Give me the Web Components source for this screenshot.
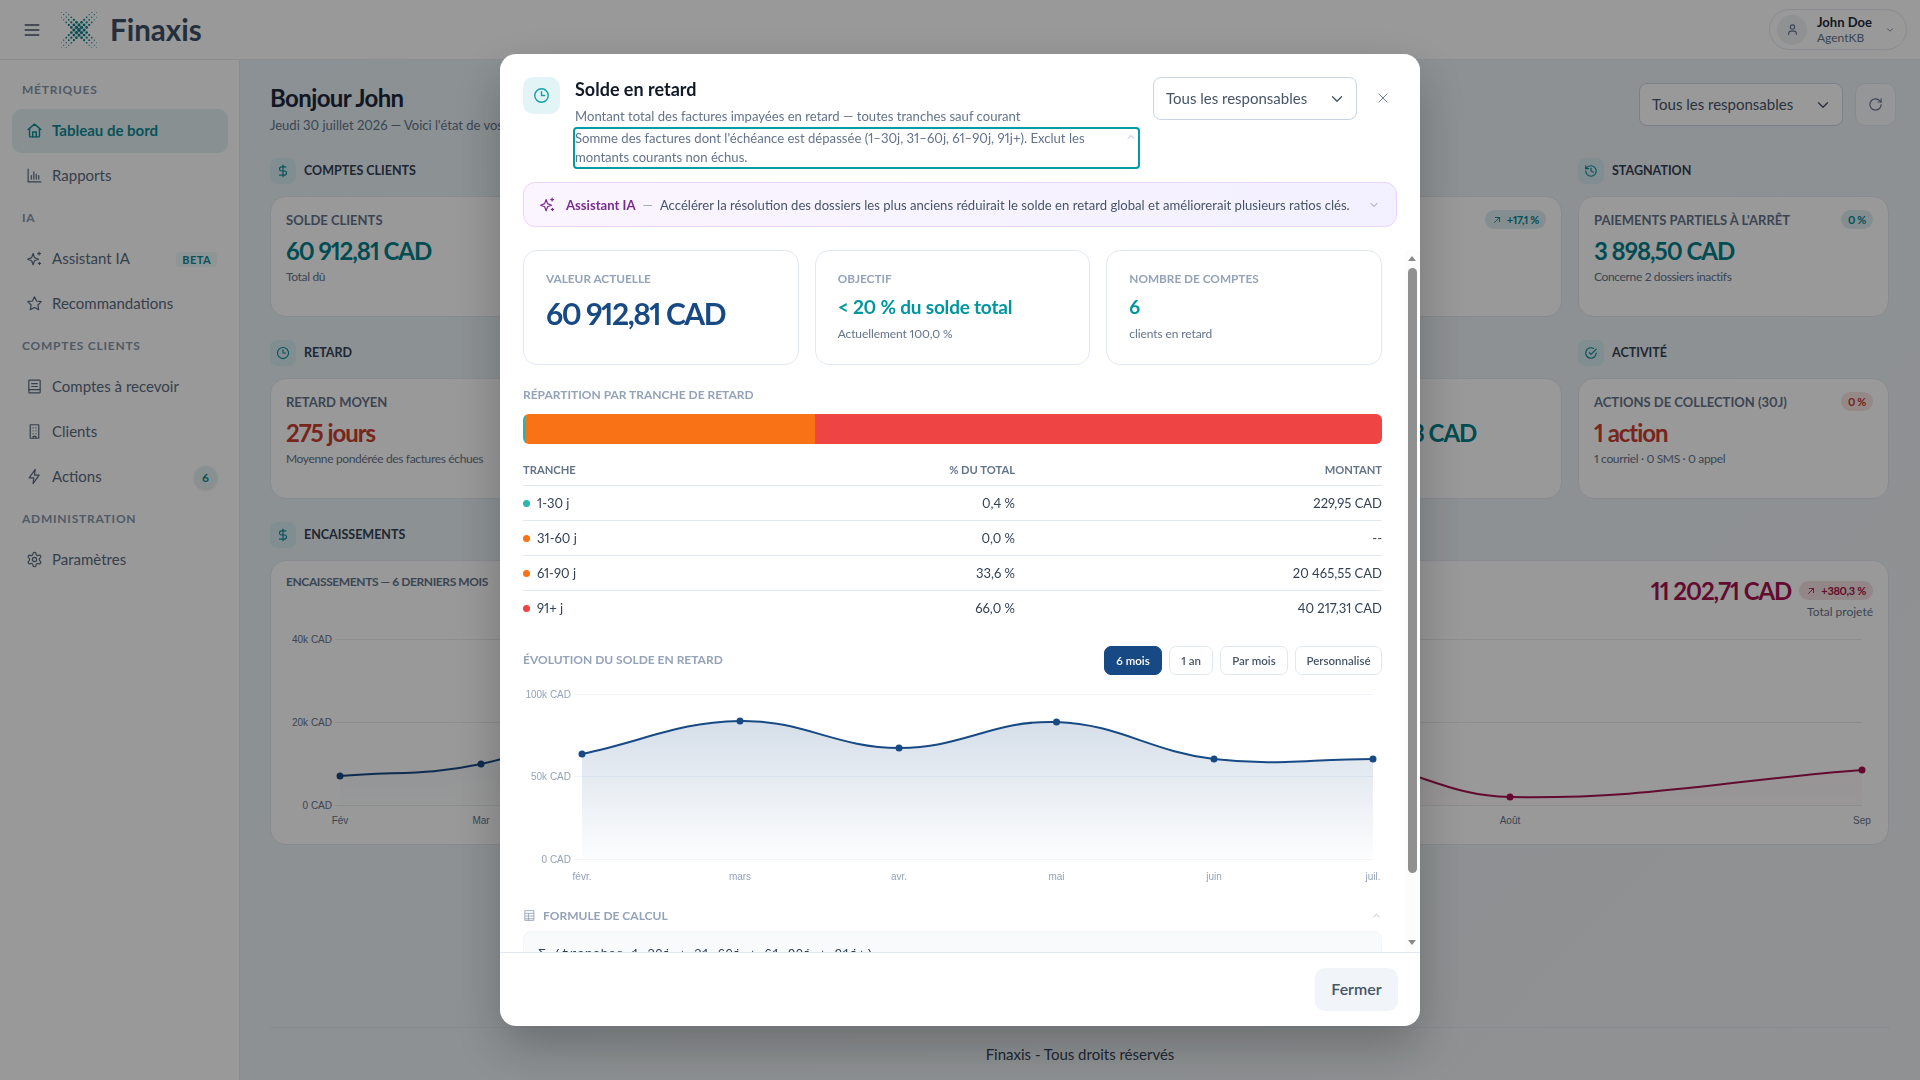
<!DOCTYPE html>
<html lang="fr">
<head>
<meta charset="utf-8">
<title>Finaxis</title>
<style>
html,body{margin:0;height:100%;overflow:hidden}
body{font-family:Lato,"Noto Sans",sans-serif;font-variant-numeric:proportional-nums;color:#334155;background:#fff}
.frame{display:flex;height:1020px}
</style>
</head>
<body>
<fx-topbar>
    <fx-user name="John Doe" role="AgentKB"></fx-user>
</fx-topbar>
<div class="frame">
    <fx-sidebar>
        <fx-nav-label>Métriques</fx-nav-label>
        <fx-nav-item icon="home" active>Tableau de bord</fx-nav-item>
        <fx-nav-item icon="chart">Rapports</fx-nav-item>
        <fx-nav-label>IA</fx-nav-label>
        <fx-nav-item icon="sparkles" tag="BETA">Assistant IA</fx-nav-item>
        <fx-nav-item icon="star">Recommandations</fx-nav-item>
        <fx-nav-label>Comptes clients</fx-nav-label>
        <fx-nav-item icon="ledger">Comptes à recevoir</fx-nav-item>
        <fx-nav-item icon="building">Clients</fx-nav-item>
        <fx-nav-item icon="zap" count="6">Actions</fx-nav-item>
        <fx-nav-label>Administration</fx-nav-label>
        <fx-nav-item icon="gear">Paramètres</fx-nav-item>
    </fx-sidebar>
    <fx-main>
        <fx-page-head title="Bonjour John" sub="Jeudi 30 juillet 2026 — Voici l'état de vos"></fx-page-head>
        <fx-row>
            <fx-cell heading="Comptes clients" icon="dollar">
                <fx-stat label="Solde clients" value="60 912,81 CAD" sub="Total dû"></fx-stat>
            </fx-cell>
            <fx-cell col="4">
                <fx-stat label="" value="" sub="" badge="+17,1 %" trend></fx-stat>
            </fx-cell>
            <fx-cell col="5" heading="Stagnation" icon="history">
                <fx-stat label="Paiements partiels à l'arrêt" value="3 898,50 CAD" sub="Concerne 2 dossiers inactifs" badge="0 %"></fx-stat>
            </fx-cell>
        </fx-row>
        <fx-row>
            <fx-cell heading="Retard" icon="clock">
                <fx-stat label="Retard moyen" value="275 jours" sub="Moyenne pondérée des factures échues" tone="red"></fx-stat>
            </fx-cell>
            <fx-cell col="4">
                <fx-stat label="" value="3 CAD" sub="" indent="144"></fx-stat>
            </fx-cell>
            <fx-cell col="5" heading="Activité" icon="check">
                <fx-stat label="Actions de collection (30j)" value="1 action" sub="1 courriel · 0 SMS · 0 appel" badge="0 %" tone="red"></fx-stat>
            </fx-cell>
        </fx-row>
        <fx-section-head heading="Encaissements" icon="dollar"></fx-section-head>
        <fx-cash-card></fx-cash-card>
        <fx-page-foot>Finaxis - Tous droits réservés</fx-page-foot>
    </fx-main>
</div>

<fx-modal>
    <fx-modal-head slot="head" heading="Solde en retard" sub="Montant total des factures impayées en retard — toutes tranches sauf courant" note="Somme des factures dont l'échéance est dépassée (1–30j, 31–60j, 61–90j, 91j+). Exclut les montants courants non échus."></fx-modal-head>
    <fx-ai-banner slot="head">Accélérer la résolution des dossiers les plus anciens réduirait le solde en retard global et améliorerait plusieurs ratios clés.</fx-ai-banner>

    <fx-kpi-grid>
        <fx-kpi label="Valeur actuelle" value="60 912,81 CAD" big></fx-kpi>
        <fx-kpi label="Objectif" value="&lt; 20 % du solde total" sub="Actuellement 100,0 %"></fx-kpi>
        <fx-kpi label="Nombre de comptes" value="6" sub="clients en retard"></fx-kpi>
    </fx-kpi-grid>
    <fx-overline style="margin-top:22px">Répartition par tranche de retard</fx-overline>
    <fx-stack-bar></fx-stack-bar>
    <fx-tranche-table></fx-tranche-table>
    <fx-evolution-head></fx-evolution-head>
    <fx-line-chart style="margin-top:9px" width="859" height="210" left="51" right="850" label-x="48" label-y="197"
        data-grid='[[11,"100k CAD"],[93,"50k CAD"],[176,"0 CAD"]]'
        data-ticks='[[59,"févr."],[217,"mars"],[376,"avr."],[533.5,"mai"],[691,"juin"],[850,"juil."]]'
        data-series='[{"color":"#174a85","fill":"#174a85","top":0.18,"bottom":0.01,"gradTop":38,"base":176,"pts":[[59,71],[217,38],[376,65],[533.5,39],[691,76],[850,76]]}]'>
    </fx-line-chart>
    <fx-formula></fx-formula>

    <fx-button slot="foot">Fermer</fx-button>
</fx-modal>

<script>
// **************************************************************************** icons
const ICONS = {
    menu: '<path d="M4 6h16M4 12h16M4 18h16"/>',
    home: '<path d="M3 10.5 12 3l9 7.5"/><path d="M5 9v11a1 1 0 0 0 1 1h12a1 1 0 0 0 1-1V9"/><path d="M9.5 21v-7h5v7"/>',
    chart: '<path d="M3 3v18h18"/><path d="M7.5 17v-5M11 17V7M14.500 17v-7M18 17v-5"/>',
    sparkles: '<path d="M10 5l2 5.800 5.800 2.200-5.800 2.200-2 5.800-2-5.800-5.800-2.200 5.800-2.200z"/><path d="M18.500 3v4M16.500 5h4M19 17.500v3M17.500 19h3"/>',
    star: '<path d="M12 2.500l2.950 5.980 6.600.96-4.780 4.650 1.130 6.570L12 17.560l-5.900 3.100 1.130-6.570-4.780-4.650 6.600-.96z"/>',
    ledger: '<path d="M5 3h14a1 1 0 0 1 1 1v16a1 1 0 0 1-1 1H5a1 1 0 0 1-1-1V4a1 1 0 0 1 1-1z"/><path d="M8 8h8M8 12h8M4 16.500h16"/>',
    building: '<path d="M6 2.500h12v19H6z"/><path d="M10 7h.01M14 7h.01M10 11h.01M14 11h.01M10 15h.01M14 15h.01M10 21v-2h4v2"/>',
    zap: '<path d="M13 2 4.500 14H11l-1 8 8.500-12H12z"/>',
    gear: '<path d="M12.220 2h-.440a2 2 0 0 0-2 2v.180a2 2 0 0 1-1 1.730l-.430.250a2 2 0 0 1-2 0l-.150-.080a2 2 0 0 0-2.730.730l-.220.380a2 2 0 0 0 .730 2.730l.150.100a2 2 0 0 1 1 1.720v.510a2 2 0 0 1-1 1.740l-.150.090a2 2 0 0 0-.730 2.730l.220.380a2 2 0 0 0 2.730.730l.150-.080a2 2 0 0 1 2 0l.430.250a2 2 0 0 1 1 1.730V20a2 2 0 0 0 2 2h.440a2 2 0 0 0 2-2v-.180a2 2 0 0 1 1-1.730l.430-.250a2 2 0 0 1 2 0l.150.080a2 2 0 0 0 2.730-.730l.220-.390a2 2 0 0 0-.730-2.730l-.150-.080a2 2 0 0 1-1-1.740v-.500a2 2 0 0 1 1-1.740l.150-.090a2 2 0 0 0 .730-2.730l-.220-.380a2 2 0 0 0-2.730-.730l-.150.080a2 2 0 0 1-2 0l-.430-.250a2 2 0 0 1-1-1.730V4a2 2 0 0 0-2-2z"/><circle cx="12" cy="12" r="3"/>',
    dollar: '<path d="M12 2v20"/><path d="M17 5H9.500a3.500 3.500 0 0 0 0 7h5a3.500 3.500 0 0 1 0 7H6"/>',
    clock: '<circle cx="12" cy="12" r="9.500"/><path d="M12 6.500V12h4.500"/>',
    history: '<path d="M3 12a9 9 0 1 0 9-9 9.750 9.750 0 0 0-6.740 2.740L3 8"/><path d="M3 3v5h5"/><path d="M12 7v5l4 2"/>',
    check: '<path d="M21 12a9 9 0 1 1-4.500-7.800"/><path d="M9 11.500l3 3 9-9"/>',
    refresh: '<path d="M21 12a9 9 0 1 1-9-9c2.520 0 4.930 1 6.740 2.740L21 8"/><path d="M21 3v5h-5"/>',
    user: '<path d="M5 21v-1.500a4.500 4.500 0 0 1 4.500-4.500h5a4.500 4.500 0 0 1 4.500 4.500V21"/><circle cx="12" cy="7.500" r="4"/>',
    up: '<path d="M6 15l6-6 6 6"/>',
    down: '<path d="M6 9l6 6 6-6"/>',
    close: '<path d="M5 5l14 14M19 5 5 19"/>',
    trend: '<path d="M6 18 18 6M8 6h10v10"/>',
    table: '<path d="M4 3h16v18H4z"/><path d="M4 8h16M4 13h16M4 18h16M10 8v13"/>'
};

// **************************************************************************** helper
// base class: open a shadow root and write styles + markup in it
class FxElement extends HTMLElement {
    render(css, html) {
        (this.shadowRoot || this.attachShadow({ mode: 'open' })).innerHTML = `<style>${css}</style>${html}`;
    }
    attr(name, fallback = '') {
        return this.hasAttribute(name) ? this.getAttribute(name) : fallback;
    }
}

// **************************************************************************** <fx-icon>
customElements.define('fx-icon', class extends FxElement {
    connectedCallback() {
        const size = this.attr('size', '16');
        const sw = this.attr('weight', '2');
        this.render(
            ':host{display:inline-flex;flex:none}svg{display:block}',
            `<svg width="${size}" height="${size}" viewBox="0 0 24 24" fill="none" stroke="currentColor" stroke-width="${sw}" stroke-linecap="round" stroke-linejoin="round">${ICONS[this.attr('name')] || ''}</svg>`
        );
    }
});

// **************************************************************************** <fx-logo>
customElements.define('fx-logo', class extends FxElement {
    connectedCallback() {
        // dots on a diagonal lattice, along the two arms of an X
        let dots = '';
        const k = 2.55;
        for (let u = -7; u <= 7; u++) {
            for (let v = -7; v <= 7; v++) {
                if (Math.abs(u) > 1 && Math.abs(v) > 1) continue;
                const x = 18 + (u + v) * k;
                const y = 18 + (u - v) * k;
                if (Math.abs(x - 18) > 18 || Math.abs(y - 18) > 18) continue;
                const d = Math.hypot(x - 18, y - 18);
                dots += `<circle cx="${x.toFixed(2)}" cy="${y.toFixed(2)}" r="${Math.max(0.6, 1.9 - d * 0.07).toFixed(2)}"/>`;
            }
        }
        this.render(
            ":host{display:flex;align-items:center;gap:13px}" +
            "span{font:700 29.5px/1 Lato,sans-serif;color:#3b4f66}",
            `<svg width="36" height="36" viewBox="0 0 36 36" fill="#0e7f8c">${dots}</svg><span>Finaxis</span>`
        );
    }
});

// **************************************************************************** <fx-topbar>
customElements.define('fx-topbar', class extends FxElement {
    connectedCallback() {
        this.render(
            ":host{display:flex;align-items:center;justify-content:space-between;height:60px;box-sizing:border-box;" +
            "padding:0 13px 0 22px;background:#fff;border-bottom:1px solid #e8edf2}" +
            ".left{display:flex;align-items:center;gap:19px;color:#475569}",
            `<div class="left"><fx-icon name="menu" size="20"></fx-icon><fx-logo></fx-logo></div><slot></slot>`
        );
    }
});

// **************************************************************************** <fx-user>
customElements.define('fx-user', class extends FxElement {
    connectedCallback() {
        this.render(
            ":host{display:flex;align-items:center;gap:10px;height:41px;padding:0 11px 0 7px;box-sizing:border-box;" +
            "width:138px;border:1px solid #e2e8f0;border-radius:21px}" +
            ".av{width:30px;height:30px;border-radius:50%;background:#eef2f6;display:grid;place-items:center;color:#64748b}" +
            ".txt{flex:1;line-height:16px}.n{font-size:13px;font-weight:700;color:#1e293b}.r{font-size:12px;color:#64748b}" +
            "fx-icon{color:#64748b}",
            `<div class="av"><fx-icon name="user" size="13"></fx-icon></div>
             <div class="txt"><div class="n">${this.attr('name')}</div><div class="r">${this.attr('role')}</div></div>
             <fx-icon name="down" size="10"></fx-icon>`
        );
    }
});

// **************************************************************************** <fx-sidebar>
customElements.define('fx-sidebar', class extends FxElement {
    connectedCallback() {
        this.render(
            ":host{display:block;flex:none;width:240px;box-sizing:border-box;padding:11px 11px 0 12px;background:#fff;border-right:1px solid #e2e8f0}",
            "<slot></slot>"
        );
    }
});

customElements.define('fx-nav-label', class extends FxElement {
    connectedCallback() {
        this.render(
            ":host{display:flex;align-items:center;height:38px;padding-left:10px;font-size:12px;font-weight:700;" +
            "letter-spacing:.75px;text-transform:uppercase;color:#8896ab}" +
            "span{transform:translateY(-1px)}",
            "<span><slot></slot></span>"
        );
    }
});

customElements.define('fx-nav-item', class extends FxElement {
    connectedCallback() {
        const active = this.hasAttribute('active');
        const tag = this.attr('tag');
        const count = this.attr('count');
        this.render(
            ":host{display:flex;align-items:center;height:44px;margin-bottom:1px;padding:0 11px 0 14px;border-radius:10px;" +
            "font-size:15px;color:#5b6b80}" +
            ":host([active]){background:#e3f1f3;color:#0e8a96;font-weight:700}" +
            "fx-icon{margin-right:9px;transform:translateY(-1px)}.grow{flex:1;transform:translateY(-1px)}" +
            ".tag{font-size:11px;font-weight:700;letter-spacing:.4px;color:#0e8a96;background:#eef7f8;border-radius:4px;padding:1px 6px}" +
            ".count{width:23px;height:23px;border-radius:50%;display:grid;place-items:center;font-size:12px;font-weight:700;" +
            "color:#0e8a96;background:#e3f1f3;box-shadow:0 1px 3px rgba(0,0,0,.12)}",
            `<fx-icon name="${this.attr('icon')}" size="17" weight="${active ? 2 : 1.7}"></fx-icon>
             <span class="grow"><slot></slot></span>
             ${tag ? `<span class="tag">${tag}</span>` : ''}
             ${count ? `<span class="count">${count}</span>` : ''}`
        );
    }
});

// **************************************************************************** <fx-main>
customElements.define('fx-main', class extends FxElement {
    connectedCallback() {
        this.render(
            ":host{display:flex;flex-direction:column;flex:1;min-width:0;box-sizing:border-box;padding:23px 24px 0 30px;" +
            "background:linear-gradient(135deg,#e8f2f7,#edf2f5 60%,#eef2f4)}",
            "<slot></slot>"
        );
    }
});

customElements.define('fx-page-head', class extends FxElement {
    connectedCallback() {
        this.render(
            ":host{display:flex;justify-content:space-between;align-items:flex-start;margin-bottom:24px;height:51px}" +
            "h1{margin:0;font-size:24px;line-height:30px;font-weight:700;letter-spacing:-.6px;color:#1e293b}" +
            "p{margin:3px 0 0;font-size:13px;line-height:18px;color:#64748b}" +
            ".tools{display:flex;gap:12px;align-items:center}" +
            ".refresh{width:41px;height:43px;box-sizing:border-box;border:1px solid #e2e8f0;border-radius:10px;display:grid;place-items:center;color:#64748b;background:#f8fafc}",
            `<div><h1>${this.attr('title')}</h1><p>${this.attr('sub')}</p></div>
             <div class="tools"><fx-select></fx-select><div class="refresh"><fx-icon name="refresh" size="15" weight="1.800"></fx-icon></div></div>`
        );
    }
});

// **************************************************************************** <fx-select>
customElements.define('fx-select', class extends FxElement {
    connectedCallback() {
        this.render(
            ":host{display:flex;flex:none;align-items:center;justify-content:space-between;width:204px;height:43px;box-sizing:border-box;" +
            "padding:0 10px 0 12px;background:#fff;border:1px solid #cbd5e1;border-radius:8px;font-size:15px;color:#475569}" +
            "span{transform:translateY(-1px)}",
            `<span>Tous les responsables</span><fx-icon name="down" size="18" weight="1.800"></fx-icon>`
        );
    }
});

// **************************************************************************** <fx-row>, <fx-cell>
customElements.define('fx-row', class extends FxElement {
    connectedCallback() {
        this.render(
            ":host{display:grid;grid-template-columns:repeat(5,311px);column-gap:16px;margin-bottom:23px}",
            "<slot></slot>"
        );
    }
});

customElements.define('fx-cell', class extends FxElement {
    connectedCallback() {
        const col = this.attr('col');
        if (col) this.style.gridColumn = col;
        const head = this.attr('heading');
        this.render(
            ":host{display:flex;flex-direction:column;justify-content:flex-end}",
            `${head ? `<fx-section-head heading="${head}" icon="${this.attr('icon')}"></fx-section-head>` : ''}<slot></slot>`
        );
    }
});

customElements.define('fx-section-head', class extends FxElement {
    connectedCallback() {
        this.render(
            ":host{display:flex;align-items:center;gap:8px;height:26px;margin-bottom:12px;font-size:12.500px;font-weight:700;" +
            "text-transform:uppercase;color:#334155}" +
            ".ic{width:26px;height:26px;border-radius:7px;background:#d8edf2;display:grid;place-items:center;color:#0e8a96}" +
            "span{transform:translateY(-1px)}",
            `<div class="ic"><fx-icon name="${this.attr('icon')}" size="14"></fx-icon></div><span>${this.attr('heading')}</span>`
        );
    }
});

// **************************************************************************** <fx-stat>
customElements.define('fx-stat', class extends FxElement {
    connectedCallback() {
        const red = this.attr('tone') === 'red';
        const badge = this.attr('badge');
        this.render(
            ":host{display:block;height:121px;box-sizing:border-box;padding:13px 15px 0;background:#fff;border:1px solid #e2e8f0;border-radius:16px}" +
            ".top{display:flex;justify-content:space-between;align-items:center;height:19px}" +
            ".lbl{font-size:13px;font-weight:700;color:#64748b;text-transform:uppercase}" +
            ".badge{display:inline-flex;align-items:center;gap:5px;height:19px;padding:0 7px;border-radius:10px;font-size:11px;font-weight:700;letter-spacing:-.3px;" +
            `color:${red ? '#c0392b' : '#00838f'};background:${red ? '#f8e4e1' : '#dcedf1'}}` +
            `.val{margin-top:7px;font-size:24px;line-height:30px;font-weight:700;letter-spacing:-1.050px;color:${red ? '#c93e31' : '#007f8b'};padding-left:${this.attr('indent', '0')}px}` +
            ".sub{margin-top:2px;font-size:12px;line-height:18px;letter-spacing:-.35px;color:#64748b}",
            `<div class="top"><span class="lbl">${this.attr('label')}</span>
               ${badge ? `<span class="badge">${this.hasAttribute('trend') ? '<fx-icon name="trend" size="10"></fx-icon>' : ''}${badge}</span>` : ''}</div>
             ${this.attr('value') ? `<div class="val">${this.attr('value')}</div>` : ''}
             ${this.attr('sub') ? `<div class="sub">${this.attr('sub')}</div>` : ''}`
        );
    }
});

// **************************************************************************** <fx-line-chart>
// Chart.js style spline: control points from the two neighbours, tension 0.4
function splinePath(pts) {
    const t = 0.4;
    const ctrl = pts.map((p, i) => {
        const a = pts[i - 1] || p, b = pts[i + 1] || p;
        const d01 = Math.hypot(p[0] - a[0], p[1] - a[1]), d12 = Math.hypot(b[0] - p[0], b[1] - p[1]);
        const s = d01 + d12 || 1;
        return [[p[0] - t * d01 / s * (b[0] - a[0]), p[1] - t * d01 / s * (b[1] - a[1])],
                [p[0] + t * d12 / s * (b[0] - a[0]), p[1] + t * d12 / s * (b[1] - a[1])]];
    });
    let d = `M${pts[0][0]} ${pts[0][1]}`;
    for (let i = 1; i < pts.length; i++) {
        d += `C${ctrl[i - 1][1][0].toFixed(1)} ${ctrl[i - 1][1][1].toFixed(1)} ${ctrl[i][0][0].toFixed(1)} ${ctrl[i][0][1].toFixed(1)} ${pts[i][0]} ${pts[i][1]}`;
    }
    return d;
}

customElements.define('fx-line-chart', class extends FxElement {
    connectedCallback() {
        const w = this.attr('width'), h = this.attr('height');
        const left = +this.attr('left'), right = +this.attr('right');
        const labelX = this.attr('label-x'), labelY = this.attr('label-y');
        const grid = JSON.parse(this.dataset.grid), ticks = JSON.parse(this.dataset.ticks), series = JSON.parse(this.dataset.series);
        const color = this.attr('text-color', '#94a3b8');
        // -------------------------------------------------------------------- grid and labels
        const gridSvg = grid.map(([y, t]) =>
            `<line x1="${left}" x2="${right}" y1="${y + .5}" y2="${y + .5}" stroke="${this.attr('grid-color', '#f1f5f9')}"/>` +
            `<text x="${labelX}" y="${y + 3.500}" text-anchor="end" fill="${color}">${t}</text>`).join('');
        const tickSvg = ticks.map(([x, t]) => `<text x="${x}" y="${labelY}" text-anchor="middle" fill="${color}">${t}</text>`).join('');
        // -------------------------------------------------------------------- series
        const seriesSvg = series.map((s, i) => {
            const path = splinePath(s.pts);
            const first = s.pts[0], last = s.pts[s.pts.length - 1];
            return `<defs><linearGradient id="g${i}" gradientUnits="userSpaceOnUse" x1="0" x2="0" y1="${s.gradTop}" y2="${s.base}">
                      <stop offset="0" stop-color="${s.fill}" stop-opacity="${s.top}"/><stop offset="1" stop-color="${s.fill}" stop-opacity="${s.bottom}"/>
                    </linearGradient></defs>
                    <path d="${path}L${last[0]} ${s.base}L${first[0]} ${s.base}Z" fill="url(#g${i})"/>
                    <path d="${path}" fill="none" stroke="${s.color}" stroke-width="2"/>
                    ${s.pts.map(p => `<circle cx="${p[0]}" cy="${p[1]}" r="3.500" fill="${s.color}"/>`).join('')}`;
        }).join('');
        this.render(
            ":host{display:block}svg{display:block;overflow:visible}text{font:10px 'Liberation Sans',Arial,sans-serif}",
            `<svg width="${w}" height="${h}" viewBox="0 0 ${w} ${h}">${gridSvg}${tickSvg}${seriesSvg}</svg>`
        );
    }
});

// **************************************************************************** <fx-cash-card>
customElements.define('fx-cash-card', class extends FxElement {
    connectedCallback() {
        this.render(
            ":host{display:block;width:1619px;height:285px;box-sizing:border-box;padding-top:20px;background:#fff;border:1px solid #e2e8f0;border-radius:16px}" +
            ".head{display:flex;justify-content:space-between;height:39px;padding:0 15px}" +
            ".lbl{margin-top:-7px;font-size:12px;line-height:16px;font-weight:700;letter-spacing:-.4px;color:#64748b;text-transform:uppercase}" +
            ".right{text-align:right}.line{display:flex;align-items:center;gap:8px}" +
            ".val{font-size:24px;line-height:19px;font-weight:700;letter-spacing:-1.050px;color:#a5134f}" +
            ".badge{display:inline-flex;align-items:center;gap:5px;height:19px;padding:0 7px;border-radius:10px;font-size:11px;font-weight:700;letter-spacing:-.3px;color:#a5153f;background:#f3dfe4}" +
            ".sub{margin-top:3px;font-size:12px;line-height:17px;color:#64748b}",
            `<div class="head"><div class="lbl">Encaissements — 6 derniers mois</div>
               <div class="right"><div class="line"><span class="val">11 202,71 CAD</span><span class="badge"><fx-icon name="trend" size="10"></fx-icon>+380,3 %</span></div>
               <div class="sub">Total projeté</div></div></div>
             <fx-line-chart width="1617" height="224" left="64" right="1591" label-x="61" label-y="204" text-color="#64748b" grid-color="#e8edf2"
                data-grid='[[19,"40k CAD"],[102,"20k CAD"],[185,"0 CAD"]]'
                data-ticks='[[69,"Fév"],[210,"Mar"],[1239,"Août"],[1591,"Sep"]]'
                data-series='[{"color":"#174a85","fill":"#174a85","top":0.06,"bottom":0.01,"gradTop":100,"base":185,"pts":[[69,156],[210,144],[400,85],[700,90]]},
                              {"color":"#a5134f","fill":"#be185d","top":0.06,"bottom":0.02,"gradTop":100,"base":185,"pts":[[700,90],[1090,142],[1239,177],[1591,150]]}]'>
             </fx-line-chart>`
        );
    }
});

// **************************************************************************** <fx-page-foot>
customElements.define('fx-page-foot', class extends FxElement {
    connectedCallback() {
        this.render(
            ":host{display:flex;align-items:center;justify-content:center;margin-top:auto;height:53px;width:1620px;box-sizing:border-box;" +
            "border-top:1px solid #e2e8f0;font-size:15px;color:#334155}",
            "<slot></slot>"
        );
    }
});

// **************************************************************************** <fx-modal>
customElements.define('fx-modal', class extends FxElement {
    connectedCallback() {
        this.render(
            ":host{position:fixed;inset:0;z-index:10;display:flex;align-items:center;justify-content:center;background:rgba(0,0,0,.4)}" +
            ".dlg{display:flex;flex-direction:column;width:920px;height:972px;background:#fff;border-radius:16px;overflow:hidden;box-shadow:0 20px 50px rgba(0,0,0,.25)}" +
            ".head{flex:none;padding:23px 23px 23px}" +
            ".wrap{position:relative;flex:1;min-height:0}" +
            ".body{height:100%;box-sizing:border-box;overflow:hidden;padding:0 38px 20px 23px}" +
            // drawn scrollbar, the screenshot browser hides native ones
            ".bar{position:absolute;top:0;right:0;bottom:0;width:15px;background:#fcfcfc}" +
            ".thumb{position:absolute;left:3px;top:18px;width:9px;height:605px;border-radius:5px;background:#909090}" +
            ".arr{position:absolute;left:3px;width:0;height:0;border-left:4.500px solid transparent;border-right:4.500px solid transparent}" +
            ".arr.u{top:6px;border-bottom:5px solid #8a8a8a}.arr.d{bottom:7px;border-top:5px solid #8a8a8a}" +
            ".foot{flex:none;height:74px;box-sizing:border-box;border-top:1px solid #e2e8f0;display:flex;justify-content:flex-end;align-items:center;padding:0 22px}",
            `<div class="dlg"><div class="head"><slot name="head"></slot></div>
             <div class="wrap"><div class="body"><slot></slot></div>
               <div class="bar"><i class="arr u"></i><div class="thumb"></div><i class="arr d"></i></div></div>
             <div class="foot"><slot name="foot"></slot></div></div>`
        );
    }
});

customElements.define('fx-modal-head', class extends FxElement {
    connectedCallback() {
        this.render(
            ":host{display:flex;align-items:flex-start;gap:15px}" +
            ".ic{flex:none;width:37px;height:37px;border-radius:10px;background:#e3f4f6;display:grid;place-items:center;color:#16a0a8}" +
            ".txt{flex:none;width:564px}h2{margin:-1px 0 0;font-size:18px;line-height:26px;font-weight:700;color:#111827}" +
            "p{margin:6px 0 0;font-size:13.100px;line-height:16px;color:#64748b}" +
            ".note{position:relative;margin:3px -1px 0 -2px;height:42px;box-sizing:border-box;border:2px solid #009ba4;border-radius:4px;font-size:13.100px;line-height:19px;color:#64748b;padding:0 20px 0 0}" +
            ".note fx-icon{position:absolute;right:1px;top:2px;color:#94a3b8}" +
            ".sel{margin-left:-1px}.x{margin:14px 0 0 4px;color:#64748b}",
            `<div class="ic"><fx-icon name="clock" size="17"></fx-icon></div>
             <div class="txt"><h2>${this.attr('heading')}</h2><p>${this.attr('sub')}</p>
               <div class="note">${this.attr('note')}<fx-icon name="up" size="12" weight="1.500"></fx-icon></div></div>
             <fx-select class="sel"></fx-select>
             <fx-icon class="x" name="close" size="14" weight="1.600"></fx-icon>`
        );
    }
});

// **************************************************************************** <fx-ai-banner>
customElements.define('fx-ai-banner', class extends FxElement {
    connectedCallback() {
        this.render(
            ":host{display:flex;align-items:center;height:45px;box-sizing:border-box;margin:13px 0 0;padding:0 16px 0 15px;" +
            "border:1px solid #e9d5ff;border-radius:12px;background:linear-gradient(90deg,#faf5ff,#f3f0ff);font-size:13.100px;color:#475569}" +
            ".ic{color:#7b2d8e;margin-right:10px}b{font-weight:700;color:#7b2d8e}i{font-style:normal;color:#94a3b8;margin:0 7px}" +
            ".t{flex:1}.c{color:#64748b}",
            `<fx-icon class="ic" name="sparkles" size="17" weight="1.700"></fx-icon><b>Assistant IA</b><i>—</i>
             <span class="t"><slot></slot></span><fx-icon class="c" name="down" size="12" weight="1.500"></fx-icon>`
        );
    }
});

// **************************************************************************** <fx-kpi-grid>, <fx-kpi>
customElements.define('fx-kpi-grid', class extends FxElement {
    connectedCallback() {
        this.render(":host{display:grid;grid-template-columns:repeat(3,1fr);column-gap:16px}", "<slot></slot>");
    }
});

customElements.define('fx-kpi', class extends FxElement {
    connectedCallback() {
        const big = this.hasAttribute('big');
        this.render(
            ":host{display:block;height:115px;box-sizing:border-box;padding:21px 22px 0;border:1px solid #e2e8f0;border-radius:14px}" +
            ".l{font-size:11.800px;line-height:14px;font-weight:700;color:#94a3b8;text-transform:uppercase}" +
            ".v{margin-top:9px;font-size:19px;line-height:24px;font-weight:700;letter-spacing:-.2px;color:#00969f}" +
            ".v.big{margin-top:9px;font-size:30px;line-height:36px;letter-spacing:-1.500px;color:#174a85}" +
            ".s{margin-top:7px;font-size:12px;line-height:16px;letter-spacing:-.1px;color:#64748b}",
            `<div class="l">${this.attr('label')}</div><div class="v ${big ? 'big' : ''}">${this.attr('value').replace('<', '&lt;')}</div>
             ${this.attr('sub') ? `<div class="s">${this.attr('sub')}</div>` : ''}`
        );
    }
});

customElements.define('fx-overline', class extends FxElement {
    connectedCallback() {
        this.render(
            ":host{display:block;font-size:12px;line-height:16px;font-weight:700;color:#94a3b8;text-transform:uppercase}",
            "<slot></slot>"
        );
    }
});

// **************************************************************************** <fx-stack-bar>
customElements.define('fx-stack-bar', class extends FxElement {
    connectedCallback() {
        this.render(
            ":host{display:flex;height:30px;margin-top:11px;border-radius:6px;overflow:hidden}" +
            "i{display:block;height:100%}",
            `<i style="width:.4%;background:#2ab5ae"></i><i style="width:33.6%;background:#f97316"></i><i style="flex:1;background:#ef4444"></i>`
        );
    }
});

// **************************************************************************** <fx-tranche-table>
customElements.define('fx-tranche-table', class extends FxElement {
    connectedCallback() {
        const rows = [
            ['#2ab5ae', '1-30 j', '0,4 %', '229,95 CAD'],
            ['#f97316', '31-60 j', '0,0 %', '--'],
            ['#f97316', '61-90 j', '33,6 %', '20 465,55 CAD'],
            ['#ef4444', '91+ j', '66,0 %', '40 217,31 CAD']
        ];
        this.render(
            ":host{display:block;margin-top:10px}" +
            "table{width:100%;border-collapse:collapse;table-layout:fixed}" +
            "th{height:31px;padding:0;font-size:11.200px;font-weight:700;color:#64748b;text-transform:uppercase;border-bottom:1px solid #e2e8f0;text-align:right}" +
            "td{height:34px;padding:0;font-size:13px;color:#334155;text-align:right;border-bottom:1px solid #e2e8f0}" +
            "tr:last-child td{border-bottom:0}" +
            "th:first-child,td:first-child{text-align:left;width:246px}th:nth-child(2){width:246px}" +
            "i{display:inline-block;width:7px;height:7px;border-radius:50%;margin-right:7px;vertical-align:1px}",
            `<table><thead><tr><th>Tranche</th><th>% du total</th><th>Montant</th></tr></thead><tbody>
             ${rows.map(r => `<tr><td><i style="background:${r[0]}"></i>${r[1]}</td><td>${r[2]}</td><td>${r[3]}</td></tr>`).join('')}
             </tbody></table>`
        );
    }
});

// **************************************************************************** <fx-evolution-head>
customElements.define('fx-evolution-head', class extends FxElement {
    connectedCallback() {
        const pills = [['6 mois', 58, 1], ['1 an', 44], ['Par mois', 68], ['Personnalisé', 87]];
        this.render(
            ":host{display:flex;justify-content:space-between;align-items:center;height:29px;margin-top:20px}" +
            ".t{font-size:12px;font-weight:700;color:#94a3b8;text-transform:uppercase}.p{display:flex;gap:7px;margin-top:2px}" +
            ".b{display:grid;place-items:center;height:29px;box-sizing:border-box;border:1px solid #e2e8f0;border-radius:7px;font-size:11.500px;color:#475569;font-weight:600}" +
            ".b.on{background:#174a85;border-color:#174a85;color:#fff}",
            `<span class="t">Évolution du solde en retard</span>
             <div class="p">${pills.map(p => `<div class="b ${p[2] ? 'on' : ''}" style="width:${p[1]}px">${p[0]}</div>`).join('')}</div>`
        );
    }
});

// **************************************************************************** <fx-formula>
customElements.define('fx-formula', class extends FxElement {
    connectedCallback() {
        this.render(
            ":host{display:block;margin-top:14px}" +
            ".h{display:flex;align-items:center;height:16px;font-size:12px;font-weight:700;color:#94a3b8;text-transform:uppercase}" +
            ".h span{flex:1;margin-left:7px}" +
            ".code{margin-top:8px;padding:13px 14px;background:#f8fafc;border:1px solid #f1f5f9;border-radius:8px;font:13px/20px 'Liberation Mono',monospace;color:#334155;height:50px}",
            `<div class="h"><fx-icon name="table" size="13" weight="1.600"></fx-icon><span>Formule de calcul</span><fx-icon name="up" size="11" weight="1.500"></fx-icon></div>
             <div class="code">Σ (tranches 1-30j + 31-60j + 61-90j + 91j+)</div>`
        );
    }
});

// **************************************************************************** <fx-button>
customElements.define('fx-button', class extends FxElement {
    connectedCallback() {
        this.render(
            ":host{display:grid;place-items:center;width:83px;height:43px;box-sizing:border-box;padding-bottom:2px;border-radius:10px;background:#f1f5f9;font-size:16px;font-weight:600;color:#475569}",
            "<slot></slot>"
        );
    }
});
</script>
</body>
</html>
